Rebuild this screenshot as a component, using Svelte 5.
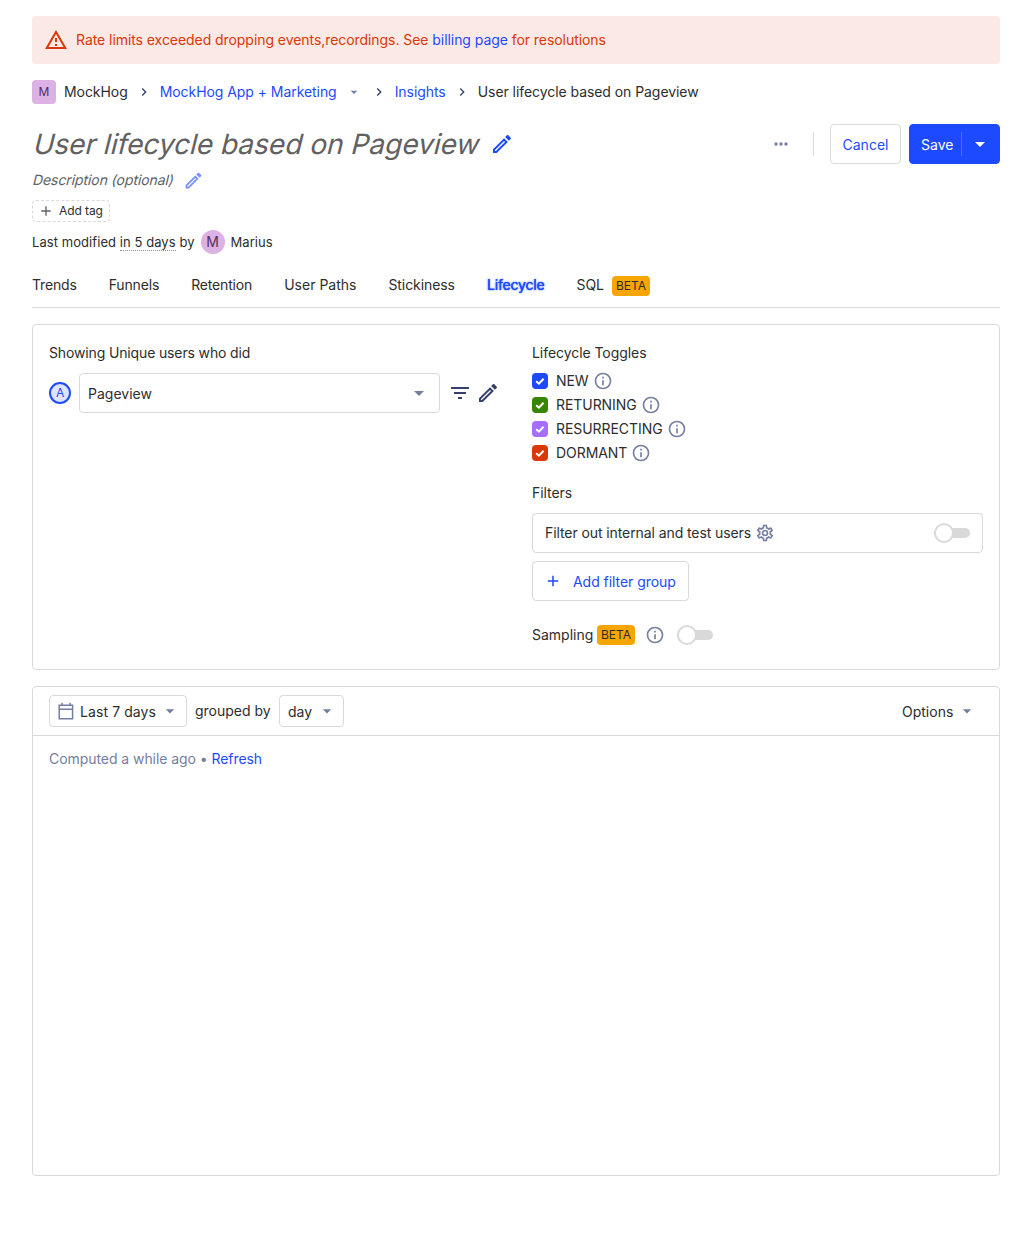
<script>
  const icons = {
    warning: 'M12 5.99L19.53 19H4.47L12 5.99M12 2L1 21h22L12 2zm1 14h-2v2h2v-2zm0-6h-2v4h2v-4z',
    chevron: 'M8.59,16.58L13.17,12L8.59,7.41L10,6L16,12L10,18L8.59,16.58Z',
    drop: 'M7 10l5 5 5-5z',
    edit: 'M14.06,9L15,9.94L5.92,19H5V18.08L14.06,9M17.66,3C17.41,3 17.15,3.1 16.96,3.29L15.13,5.12L18.88,8.87L20.71,7.04C21.1,6.65 21.1,6 20.71,5.63L18.37,3.29C18.17,3.09 17.92,3 17.66,3M14.06,6.19L3,17.25V21H6.75L17.81,9.94L14.06,6.19Z',
    plus: 'M19,13H13V19H11V13H5V11H11V5H13V11H19V13Z',
    filter: 'M6,13H18V11H6M3,6V8H21V6M10,18H14V16H10V18Z',
    info: 'M11,9H13V7H11M12,20C7.59,20 4,16.41 4,12C4,7.59 7.59,4 12,4C16.41,4 20,7.59 20,12C20,16.41 16.41,20 12,20M12,2A10,10 0 0,0 2,12A10,10 0 0,0 12,22A10,10 0 0,0 22,12A10,10 0 0,0 12,2M11,17H13V11H11V17Z',
    dots: 'M16,12A2,2 0 0,1 18,10A2,2 0 0,1 20,12A2,2 0 0,1 18,14A2,2 0 0,1 16,12M10,12A2,2 0 0,1 12,10A2,2 0 0,1 14,12A2,2 0 0,1 12,14A2,2 0 0,1 10,12M4,12A2,2 0 0,1 6,10A2,2 0 0,1 8,12A2,2 0 0,1 6,14A2,2 0 0,1 4,12Z',
    gear: 'M12,8A4,4 0 0,1 16,12A4,4 0 0,1 12,16A4,4 0 0,1 8,12A4,4 0 0,1 12,8M12,10A2,2 0 0,0 10,12A2,2 0 0,0 12,14A2,2 0 0,0 14,12A2,2 0 0,0 12,10M10,22C9.75,22 9.54,21.82 9.5,21.58L9.13,18.93C8.5,18.68 7.96,18.34 7.44,17.94L4.95,18.95C4.73,19.03 4.46,18.95 4.34,18.73L2.34,15.27C2.21,15.05 2.27,14.78 2.46,14.63L4.57,12.97L4.5,12L4.57,11L2.46,9.37C2.27,9.22 2.21,8.95 2.34,8.73L4.34,5.27C4.46,5.05 4.73,4.96 4.95,5.05L7.44,6.05C7.96,5.66 8.5,5.32 9.13,5.07L9.5,2.42C9.54,2.18 9.75,2 10,2H14C14.25,2 14.46,2.18 14.5,2.42L14.87,5.07C15.5,5.32 16.04,5.66 16.56,6.05L19.05,5.05C19.27,4.96 19.54,5.05 19.66,5.27L21.66,8.73C21.79,8.95 21.73,9.22 21.54,9.37L19.43,11L19.5,12L19.43,13L21.54,14.63C21.73,14.78 21.79,15.05 21.66,15.27L19.66,18.73C19.54,18.95 19.27,19.04 19.05,18.95L16.56,17.95C16.04,18.34 15.5,18.68 14.87,18.93L14.5,21.58C14.46,21.82 14.25,22 14,22H10M11.25,4L10.88,6.61C9.68,6.86 8.62,7.5 7.85,8.39L5.44,7.35L4.69,8.65L6.8,10.2C6.4,11.37 6.4,12.64 6.8,13.8L4.68,15.36L5.43,16.66L7.86,15.62C8.63,16.5 9.68,17.14 10.87,17.38L11.24,20H12.76L13.13,17.39C14.32,17.14 15.37,16.5 16.14,15.62L18.57,16.66L19.32,15.36L17.2,13.81C17.6,12.64 17.6,11.37 17.2,10.2L19.31,8.65L18.56,7.35L16.15,8.39C15.38,7.5 14.32,6.86 13.12,6.62L12.75,4H11.25Z'
  };
  const tabs = ['Trends', 'Funnels', 'Retention', 'User Paths', 'Stickiness', 'Lifecycle', 'SQL'];
  const toggles = [
    { label: 'NEW', kind: 'new' },
    { label: 'RETURNING', kind: 'returning' },
    { label: 'RESURRECTING', kind: 'resurrecting' },
    { label: 'DORMANT', kind: 'dormant' }
  ];
</script>

{#snippet icon(name, size)}
  <svg class="icon" width={size} height={size} viewBox="0 0 24 24" aria-hidden="true"><path d={icons[name]} /></svg>
{/snippet}

{#snippet toggle(label)}
  <button class="switch" role="switch" aria-checked="false" aria-label={label}><i class="track"></i><i class="knob"></i></button>
{/snippet}

<main>
  <div class="banner">
    {@render icon('warning', 24)}
    <p>Rate limits exceeded dropping events,recordings. See <a href="#billing">billing page</a> for resolutions</p>
  </div>

  <nav class="crumbs">
    <span class="lettermark">M</span>
    <span class="org">MockHog</span>
    <span class="sep">{@render icon('chevron', 16)}</span>
    <a href="#project">MockHog App + Marketing</a>
    <span class="crumb-drop">{@render icon('drop', 16)}</span>
    <span class="sep tight">{@render icon('chevron', 16)}</span>
    <a href="#insights">Insights</a>
    <span class="sep">{@render icon('chevron', 16)}</span>
    <span>User lifecycle based on Pageview</span>
  </nav>

  <header>
    <h1>User lifecycle based on Pageview</h1>
    <span class="title-edit">{@render icon('edit', 24)}</span>
    <div class="actions">
      <span class="more">{@render icon('dots', 20)}</span>
      <i class="divider"></i>
      <button class="btn cancel">Cancel</button>
      <button class="btn save"><span>Save</span><i></i>{@render icon('drop', 24)}</button>
    </div>
  </header>

  <div class="desc"><em>Description (optional)</em>{@render icon('edit', 21)}</div>
  <button class="tag">{@render icon('plus', 16)}<span>Add tag</span></button>
  <div class="modified">
    <span>Last modified <u>in 5 days</u> by</span>
    <span class="avatar">M</span>
    <span>Marius</span>
  </div>

  <div class="tabs">
    {#each tabs as tab}
      <span class="tab" class:active={tab === 'Lifecycle'}>{tab}{#if tab === 'SQL'}<span class="beta">BETA</span>{/if}</span>
    {/each}
  </div>

  <section class="card editor">
    <div class="col">
      <h2 class="showing">Showing Unique users who did</h2>
      <div class="series">
        <span class="letter">A</span>
        <button class="select"><span>Pageview</span>{@render icon('drop', 24)}</button>
        <span class="tools">{@render icon('filter', 24)}{@render icon('edit', 24)}</span>
      </div>
    </div>
    <div class="col">
      <h2>Lifecycle Toggles</h2>
      <div class="toggles">
        {#each toggles as t}
          <div class="check">
            <span class="box {t.kind}"><svg width="16" height="16" viewBox="0 0 16 16"><path d="M4.2 8.2L6.9 10.7L11.6 5.7" /></svg></span>
            <span>{t.label}</span>
            {@render icon('info', 20)}
          </div>
        {/each}
      </div>
      <h2 class="filters-title">Filters</h2>
      <div class="internal">
        <span>Filter out internal and test users</span>
        {@render icon('gear', 20)}
        {@render toggle('Filter out internal and test users')}
      </div>
      <button class="btn add">{@render icon('plus', 18)}<span>Add filter group</span></button>
      <div class="sampling">
        <span>Sampling</span><span class="beta">BETA</span>
        {@render icon('info', 20)}
        {@render toggle('Sampling')}
      </div>
    </div>
  </section>

  <section class="card result">
    <div class="bar">
      <button class="pick range">
        <svg class="calendar" width="20" height="20" viewBox="0 0 20 20"><path d="M3.2 4.2h13.4v13.6H3.2zM3 8.3h14M6 1.8v2.4M14 1.8v2.4" /></svg>
        <span>Last 7 days</span>{@render icon('drop', 20)}
      </button>
      <span class="by">grouped by</span>
      <button class="pick day"><span>day</span>{@render icon('drop', 20)}</button>
      <button class="pick options"><span>Options</span>{@render icon('drop', 20)}</button>
    </div>
    <p class="computed">Computed a while ago • <a href="#refresh">Refresh</a></p>
  </section>
</main>

<style>
  :global(body) { margin: 0; background: #fff; }
  main {
    box-sizing: border-box; width: 1032px; height: 1256px; padding: 16px 32px;
    font: 400 14px/20px Inter, sans-serif; font-optical-sizing: none; letter-spacing: -.06px; color: #2d2d2d;
  }
  main :global(*) { box-sizing: border-box; }
  .icon { display: block; flex: none; fill: currentColor; }
  a { color: #1d4aff; text-decoration: none; }
  p, h1, h2 { margin: 0; font-weight: inherit; }
  h2 { font-size: 14px; line-height: 20px; }
  button { font: inherit; color: inherit; background: #fff; border: 1px solid #d9d9d9; border-radius: 4px; padding: 0; display: flex; align-items: center; white-space: nowrap; }

  .banner { height: 48px; padding: 0 12px; display: flex; align-items: center; gap: 8px; color: #db3707; background: #fbe9e5; border-radius: 4px; }

  .crumbs { display: flex; align-items: center; height: 24px; margin-top: 16px; white-space: nowrap; }
  .lettermark { width: 24px; height: 24px; border-radius: 4px; background: #dcb1e3; color: #572e5e; font-size: 12px; line-height: 24px; text-align: center; }
  .org { margin-left: 8px; }
  .sep { margin: 0 8px; color: #35416b; }
  .sep.tight { margin-left: 9px; }
  .crumb-drop { margin-left: 9px; color: #747ea1; }

  header { display: flex; align-items: center; height: 40px; margin-top: 20px; }
  /* The upright face is slanted so that the f keeps its short stem. */
  h1 { width: 448px; font-size: 28px; line-height: 40px; letter-spacing: 0; color: #616161; white-space: nowrap; transform: skewX(-14deg); transform-origin: 0 30px; }
  .title-edit { margin-left: 10px; color: #1d4aff; }
  .actions { margin-left: auto; display: flex; align-items: center; }
  .more { color: #747ea1; margin-right: 22px; }
  .divider { width: 1px; height: 24px; background: #d9d9d9; margin-right: 16px; }
  .btn { height: 40px; padding: 1px 12px 0; color: #1d4aff; }
  .cancel { width: 71px; justify-content: center; margin-right: 8px; padding: 1px 0 0; }
  .save { width: 91px; padding: 0 0 0 11px; background: #1d4aff; border-color: #1d4aff; color: #fff; }
  .save span { width: 32px; padding-top: 1px; }
  .save i { width: 1px; height: 24px; background: #4a6eff; margin: 0 6px 0 8px; }

  .desc { display: flex; align-items: center; height: 24px; margin-top: 4px; color: #616161; }
  .desc em { width: 141px; white-space: nowrap; font-style: normal; transform: skewX(-14deg); transform-origin: 0 15px; letter-spacing: -.08px; }
  .desc .icon { margin-left: 10px; color: #1d4aff; opacity: .6; }
  .tag { height: 22px; margin-top: 8px; width: 78px; border-style: dashed; font-size: 12px; letter-spacing: -.08px; padding-left: 5px; gap: 5px; }
  .tag .icon { color: #5f5f5f; }
  .modified { display: flex; align-items: center; gap: 6px; height: 24px; margin-top: 8px; font-size: 13px; letter-spacing: .065px; }
  .modified u { text-decoration: none; border-bottom: 1px dotted #8f8f8f; }
  .avatar { width: 24px; height: 24px; border-radius: 50%; background: #dcb1e3; color: #572e5e; font-size: 14px; line-height: 24px; text-align: center; }

  .tabs { display: flex; gap: 32px; height: 44px; margin-top: 10px; border-bottom: 1px solid #d9d9d9; line-height: 42px; letter-spacing: -.16px; }
  .tab { display: flex; align-items: center; height: 42px; white-space: nowrap; }
  .tab:nth-child(4) { letter-spacing: 0; }
  .tab:nth-child(5), .tab:nth-child(7) { letter-spacing: -.08px; }
  .active { color: #1d4aff; text-shadow: 0 0 .5px #1d4aff, 0 0 2px #1d4aff; }
  .beta { width: 38px; height: 20px; border-radius: 4px; background: #f7a501; font-size: 12px; line-height: 20px; letter-spacing: 0; text-align: center; }
  .tab .beta { margin: 2px 0 0 8px; }

  .card { border: 1px solid #d9d9d9; border-radius: 4px; margin-top: 16px; }
  .editor { height: 346px; padding: 18px 16px; display: grid; grid-template-columns: 451px 451px; gap: 32px; }
  .showing { letter-spacing: -.14px; }
  .series { display: flex; align-items: center; height: 40px; margin-top: 10px; }
  .letter { width: 22px; height: 22px; border: 2px solid #1d4aff; border-radius: 50%; background: #dde4ff; color: #1d4aff; font-size: 12px; line-height: 18px; text-align: center; }
  .select { width: 361px; height: 40px; margin-left: 8px; padding: 0 8px; justify-content: space-between; }
  .select span { padding-top: 1px; }
  .select .icon { color: #747ea1; }
  .tools { display: flex; gap: 4px; margin-left: 8px; color: #35416b; }

  .toggles { margin-top: 6px; }
  .check { display: flex; align-items: center; height: 24px; }
  .check .icon { margin-left: 4px; color: #747ea1; }
  .box { width: 16px; height: 16px; border-radius: 4px; margin-right: 8px; }
  .box svg { display: block; fill: none; stroke: #fff; stroke-width: 2; }
  .new { background: #1d4aff; }
  .returning { background: #388600; }
  .resurrecting { background: #a56eff; }
  .dormant { background: #db3707; }
  .filters-title { margin-top: 18px; }
  .internal { display: flex; align-items: center; height: 40px; margin-top: 10px; padding: 0 12px; border: 1px solid #d9d9d9; border-radius: 4px; letter-spacing: -.09px; }
  .internal .icon { margin-left: 4px; color: #747ea1; }
  .internal .switch { margin-left: auto; }
  .switch { position: relative; width: 36px; height: 20px; border: 0; background: none; }
  .track { width: 36px; height: 10px; border-radius: 5px; background: #d9d9d9; }
  .knob { position: absolute; left: 0; top: 0; width: 20px; height: 20px; border: 2px solid #d9d9d9; border-radius: 50%; background: #fff; }
  .add { width: 157px; margin-top: 8px; padding: 0 11px; gap: 11px; letter-spacing: -.05px; }
  .add span { padding-top: 1px; }
  .sampling { display: flex; align-items: center; height: 20px; margin-top: 24px; letter-spacing: 0; }
  .sampling > span:first-child { width: 61px; }
  .sampling .beta { margin-left: 4px; }
  .sampling .icon { margin: 0 12px 0 10px; color: #747ea1; }

  .result { height: 490px; }
  .bar { display: flex; align-items: center; height: 49px; padding: 0 16px; border-bottom: 1px solid #d9d9d9; letter-spacing: 0; }
  .pick { height: 32px; padding: 0 6px 0 7px; }
  .pick span { padding-top: 1px; }
  .pick .icon { margin-left: auto; color: #747ea1; }
  .range { width: 138px; }
  .calendar { fill: none; stroke: #747ea1; stroke-width: 1.5; margin: 0 3px 0 -1px; }
  .range span { margin-left: 1px; letter-spacing: .09px; }
  .by { width: 76px; margin: 0 8px; white-space: nowrap; }
  .day { width: 65px; padding-left: 8px; }
  .options { width: 90px; margin-left: auto; border-color: transparent; padding: 0 5px 0 8px; }
  .computed { padding: 13px 16px; color: #747ea1; }
</style>
